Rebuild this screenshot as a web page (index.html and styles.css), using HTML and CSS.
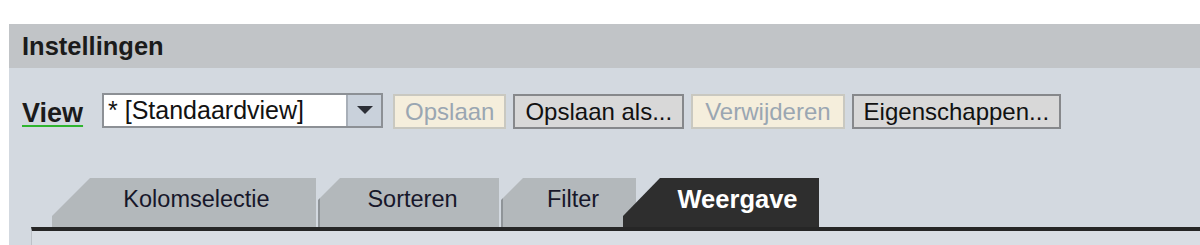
FILE: index.html
```html
<!DOCTYPE html>
<html lang="nl">
<head>
<meta charset="utf-8">
<title>Instellingen</title>
<link rel="stylesheet" href="styles.css">
</head>
<body>
<div class="panel">
  <div class="panel-header">Instellingen</div>
  <div class="panel-body">
    <div class="toolbar">
      <span class="view-label">View</span>
      <div class="select">
        <span class="select-value">* [Standaardview]</span>
        <span class="select-btn">
          <svg width="16" height="8" viewBox="0 0 16 8"><polygon points="0,0 16,0 8,8" fill="#2c2f36"/></svg>
        </span>
      </div>
      <button class="btn btn-disabled">Opslaan</button>
      <button class="btn">Opslaan als...</button>
      <button class="btn btn-disabled btn-wide">Verwijderen</button>
      <button class="btn">Eigenschappen...</button>
    </div>
    <div class="tabs-area">
      <div class="tabs">
        <div class="tab tab-first">Kolomselectie</div>
        <div class="tab tab-mid tab-sorteren">Sorteren</div>
        <div class="tab tab-mid tab-filter">Filter</div>
        <div class="tab tab-active">Weergave</div>
      </div>
      <div class="tab-content"></div>
    </div>
  </div>
</div>
</body>
</html>
```

FILE: styles.css
```css
html, body {
  margin: 0;
  padding: 0;
  background: #ffffff;
  font-family: "Liberation Sans", Arial, sans-serif;
}

.panel {
  margin: 24px 0 0 9px;
  background: #d3d9e0;
  height: 221px;
  overflow: hidden;
}

.panel-header {
  height: 44px;
  line-height: 44px;
  background: #c1c4c7;
  padding-left: 13px;
  font-weight: bold;
  font-size: 25.5px;
  color: #1b1b1b;
}

.panel-body {
  padding-top: 25px;
}

.toolbar {
  display: flex;
  align-items: center;
  padding-left: 13px;
  height: 36px;
}

.view-label {
  font-weight: bold;
  font-size: 27px;
  color: #1b1b1b;
  text-decoration: underline;
  text-decoration-color: #2fb52f;
  text-decoration-thickness: 2px;
  text-underline-offset: 3px;
  margin-right: 19px;
  margin-top: 5px;
}

.select {
  display: flex;
  width: 281px;
  height: 35px;
  box-sizing: border-box;
  border: 2px solid #8c9095;
  background: #ffffff;
  margin-right: 10px;
  margin-top: -2px;
}

.select-value {
  flex: 1;
  font-size: 25px;
  line-height: 31px;
  padding-left: 4px;
  color: #121212;
  white-space: nowrap;
}

.select-btn {
  width: 33px;
  border-left: 2px solid #a8afb8;
  background: #c9d1db;
  display: flex;
  align-items: center;
  justify-content: center;
}

.btn {
  height: 35px;
  box-sizing: border-box;
  border: 2px solid #86888b;
  background: #d8d8d8;
  font-family: "Liberation Sans", Arial, sans-serif;
  font-size: 24px;
  color: #111111;
  padding: 0 10px;
  margin: 0 7px 0 0;
  border-radius: 0;
  line-height: 31px;
}

.btn-disabled {
  background: #f5eedc;
  border-color: #c9c8c0;
  color: #9aa6b2;
}

.btn-wide {
  padding: 0 12px;
}

.tabs-area {
  margin-top: 49px;
  margin-left: 22px;
}

.tabs {
  display: flex;
  padding-left: 21px;
  height: 49px;
  align-items: flex-end;
}

.tab {
  height: 49px;
  box-sizing: border-box;
  line-height: 43px;
  text-align: center;
  font-size: 23.5px;
  color: #17172a;
  background: #b3b8bb;
  white-space: nowrap;
}

.tab-first {
  width: 264px;
  padding-left: 25px;
  clip-path: polygon(38px 0, 100% 0, 100% 100%, 0 100%, 0 38px);
  margin-right: 2px;
}

.tab-mid {
  background: linear-gradient(to right, #8f9498 0, #8f9498 2px, #b3b8bb 2px);
  clip-path: polygon(22px 0, 100% 0, 100% 100%, 0 100%, 0 22px);
  padding-left: 8px;
  margin-right: 2px;
}

.tab-sorteren {
  width: 181px;
}

.tab-filter {
  width: 135px;
  padding-left: 9px;
}

.tab-active {
  width: 196px;
  margin-left: -15px;
  padding-left: 33px;
  background: #2e2e2e;
  color: #ffffff;
  font-weight: bold;
  font-size: 25.5px;
  clip-path: polygon(37px 0, 100% 0, 100% 100%, 0 100%, 0 38px);
  position: relative;
}

.tab-content {
  border-top: 4px solid #262626;
  border-left: 1px solid #bcc1c7;
  background: #d9dee4;
  height: 40px;
}
```
